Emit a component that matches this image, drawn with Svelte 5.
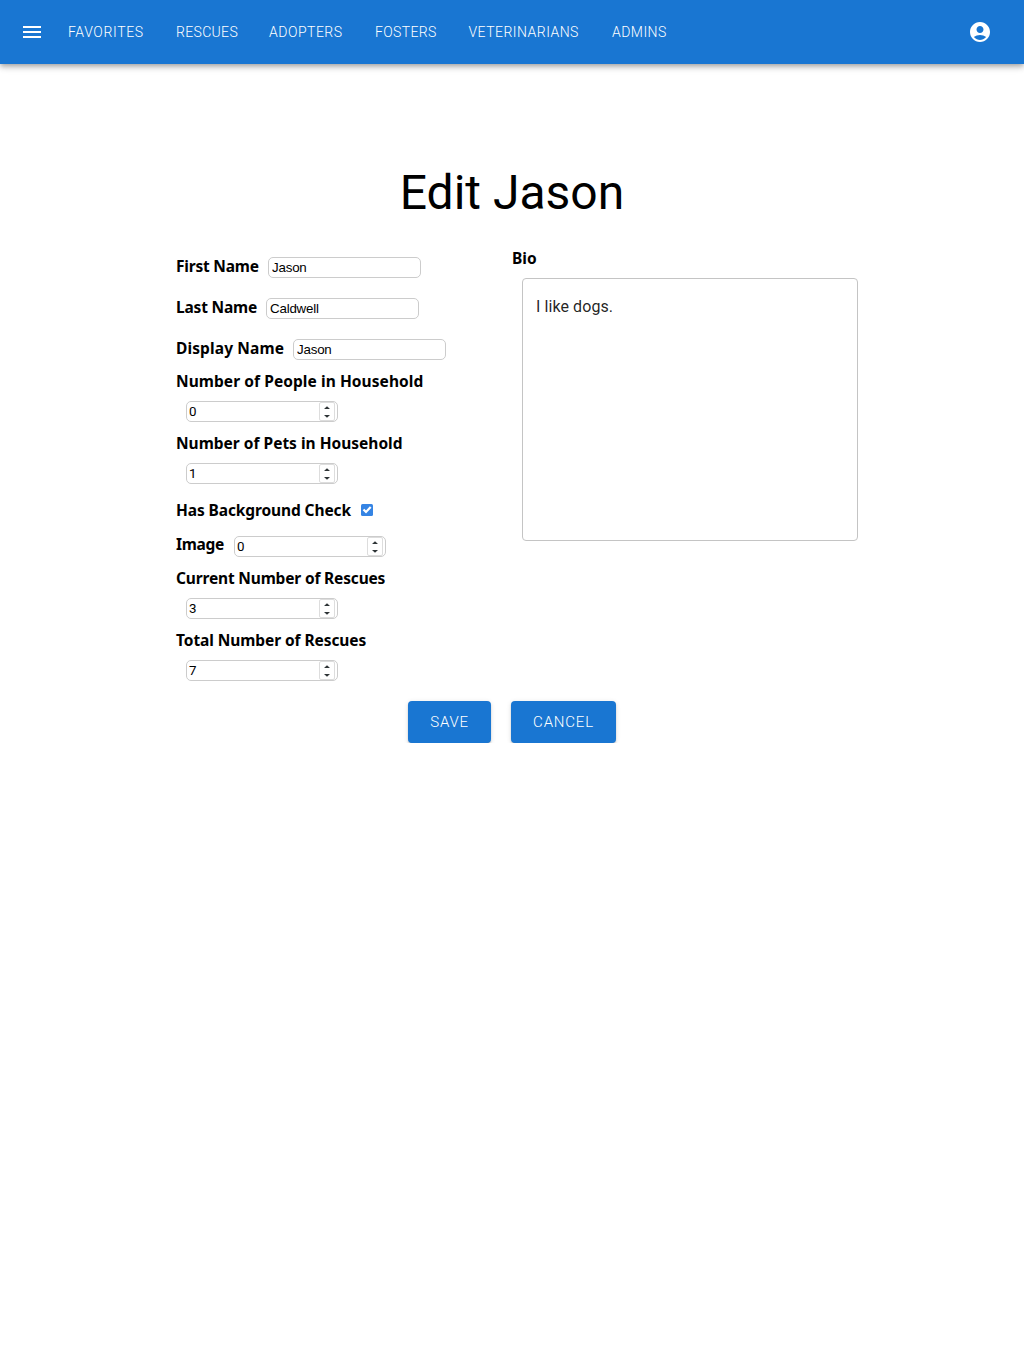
<script>
  // Each link reserves its own slot width and tracking.
  const links = [
    { name: 'Favorites', slot: 108, tracking: 0.65 },
    { name: 'Rescues', slot: 93, tracking: 0.33 },
    { name: 'Adopters', slot: 106, tracking: 0.5 },
    { name: 'Fosters', slot: 93.5, tracking: 0.36 },
    { name: 'Veterinarians', slot: 143.5, tracking: 0.47 },
    { name: 'Admins', slot: 60, tracking: 0.45 }
  ];
  let fields = $state([
    { id: 'firstName', label: 'First Name', width: 82, tracking: -0.21, kind: 'text', value: 'Jason' },
    { id: 'lastName', label: 'Last Name', width: 80, tracking: -0.2, kind: 'text', value: 'Caldwell' },
    { id: 'displayName', label: 'Display Name', width: 107, tracking: 0.12, kind: 'text', value: 'Jason' },
    { id: 'people', label: 'Number of People in Household', width: 248, tracking: 0.07, kind: 'number', stacked: true, value: '0' },
    { id: 'pets', label: 'Number of Pets in Household', width: 227, tracking: 0, kind: 'number', stacked: true, value: '1' },
    { id: 'background', label: 'Has Background Check', width: 175, tracking: -0.11, kind: 'check', value: true },
    { id: 'image', label: 'Image', width: 48, tracking: -0.28, kind: 'number', value: '0' },
    { id: 'current', label: 'Current Number of Rescues', width: 210, tracking: -0.17, kind: 'number', stacked: true, value: '3' },
    { id: 'total', label: 'Total Number of Rescues', width: 191, tracking: -0.08, kind: 'number', stacked: true, value: '7' }
  ]);
  let bio = $state('I like dogs.');
</script>

<header>
  <button class="icon menu" aria-label="Menu">
    <svg viewBox="0 0 24 24"><path d="M3 18h18v-2H3v2zm0-5h18v-2H3v2zm0-7v2h18V6H3z" /></svg>
  </button>
  <nav>
    {#each links as link}
      <a href="#{link.name}" style:width="{link.slot}px" style:letter-spacing="{link.tracking}px">{link.name}</a>
    {/each}
  </nav>
  <button class="icon account" aria-label="Account">
    <svg viewBox="0 0 24 24"><path d="M12 2C6.480 2 2 6.480 2 12s4.480 10 10 10 10-4.480 10-10S17.520 2 12 2zm0 4c1.930 0 3.500 1.570 3.500 3.500S13.930 13 12 13s-3.500-1.570-3.500-3.500S10.070 6 12 6zm0 14c-2.030 0-4.430-.820-6.140-2.880C7.550 15.800 9.680 15 12 15s4.450.800 6.140 2.120C16.430 19.180 14.030 20 12 20z" /></svg>
  </button>
</header>

<main>
  <h1>Edit Jason</h1>
  <div class="columns">
    <div class="fields">
      {#each fields as f}
        <div class="row {f.kind}" class:stacked={f.stacked}>
          <label for={f.id} style:width="{f.width}px" style:letter-spacing="{f.tracking}px">{f.label}</label>
          {#if f.kind === 'check'}
            <button class="box" id={f.id} role="checkbox" aria-checked={f.value} aria-label={f.label} onclick={() => (f.value = !f.value)}>
              {#if f.value}
                <svg viewBox="0 0 12 12"><path d="M2.500 5.400 5 8 9.700 3" /></svg>
              {/if}
            </button>
          {:else}
            <div class="control">
              <input id={f.id} bind:value={f.value} />
              {#if f.kind === 'number'}
                <span class="spinner">
                  <svg viewBox="0 0 16 19"><path d="M5 7 8 4.300 11 7zM5 13h6l-3 2.700z" /></svg>
                </span>
              {/if}
            </div>
          {/if}
        </div>
      {/each}
    </div>
    <div class="bio">
      <label for="bio">Bio</label>
      <textarea id="bio" bind:value={bio}></textarea>
    </div>
  </div>
  <div class="actions">
    <button class="save">Save</button>
    <button class="cancel">Cancel</button>
  </div>
</main>

<style>
  :global(body) { background: #fff; }
  button { border: 0; padding: 0; margin: 0; }
  header {
    height: 64px;
    box-sizing: border-box;
    display: flex;
    align-items: center;
    padding: 0 32px 0 20px;
    background: #1976d2;
    color: #fff;
    box-shadow: 0 2px 4px -1px rgba(0,0,0,.2), 0 4px 5px rgba(0,0,0,.14), 0 1px 10px rgba(0,0,0,.12);
  }
  .icon { width: 24px; height: 24px; background: none; color: #fff; }
  .icon svg { display: block; width: 24px; height: 24px; fill: currentColor; }
  .account { margin-left: auto; }
  nav { display: flex; margin-left: 24px; }
  nav a { font: 300 14px/24px Roboto, sans-serif; text-transform: uppercase; text-decoration: none; color: #fff; white-space: nowrap; }
  main { width: 672px; margin: 0 auto; padding-top: 101px; }
  h1 { margin: 0; font: 400 48px/56px Roboto, sans-serif; text-align: center; color: #000; }
  .columns { display: grid; grid-template-columns: 336px 346px; margin-top: 26px; }
  label { flex: none; font: 700 15.5px/22px "Noto Sans", "Open Sans", sans-serif; color: #000; white-space: nowrap; }
  .row { display: flex; height: 41px; box-sizing: border-box; padding-top: 10px; gap: 10px; }
  .row label { margin-top: -2px; }
  .row.number label { margin-top: -3px; }
  .row.stacked { height: 62px; flex-direction: column; padding: 0; gap: 9px; }
  .row.stacked label { margin: 0; }
  .stacked .control { margin-left: 10px; }
  .row.check { height: 32px; padding-top: 5px; }
  .row.check label { margin: 0; }
  .control { display: flex; width: 153px; height: 21px; box-sizing: border-box; border: 1px solid #ccc; border-radius: 5px; background: #fff; }
  .number .control { width: 152px; }
  input { flex: 1; min-width: 0; border: 0; outline: 0; padding: 0 0 0 3px; background: none; color: #000; font: 13.333px/19px "Liberation Sans", Arial, sans-serif; letter-spacing: -.2px; }
  .number input { padding-left: 2px; font: 400 13.333px/19px Roboto, sans-serif; }
  .spinner { width: 16px; height: 19px; box-sizing: border-box; margin-right: 2px; border: 1px solid #ddd; border-radius: 2px; }
  .spinner svg { display: block; width: 16px; height: 19px; margin: -1px; fill: #2e3436; }
  .box { width: 12px; height: 12px; margin-top: 5px; background: #3584e4; border-radius: 1.5px; }
  .box svg { display: block; width: 12px; height: 12px; fill: none; stroke: #fff; stroke-width: 2.2; }
  .bio { display: flex; flex-direction: column; }
  textarea { width: 336px; height: 263px; box-sizing: border-box; margin: 9px 0 0 10px; padding: 16px 13px; border: 1px solid #c4c4c4; border-radius: 4px; resize: none; outline: 0; font: 400 16px/23px Roboto, sans-serif; letter-spacing: .08px; color: rgba(0,0,0,.87); overflow: hidden; }
  .actions { display: flex; justify-content: center; gap: 20px; margin-top: 10px; }
  .actions button { height: 42px; background: #1976d2; color: #fff; border-radius: 4px; font: 300 15px/26px Roboto, sans-serif; letter-spacing: .8px; text-transform: uppercase; box-shadow: 0 3px 1px -2px rgba(0,0,0,.2), 0 2px 2px rgba(0,0,0,.14), 0 1px 5px rgba(0,0,0,.12); }
  .save { width: 83px; }
  .cancel { width: 105px; }
</style>
